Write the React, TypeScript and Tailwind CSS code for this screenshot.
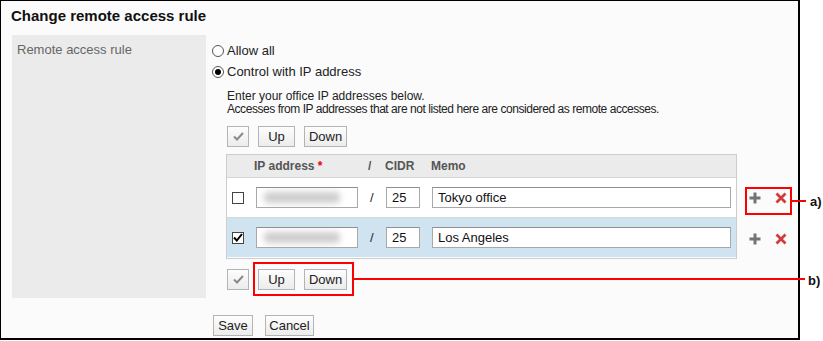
import type { ReactNode } from "react";

const font = { fontFamily: '"Liberation Sans", Arial, sans-serif' };

function Btn({ children, className = "" }: { children: ReactNode; className?: string }) {
    return (
        <button
            className={`h-[21px] border border-[#b4b4b4] bg-gradient-to-b from-[#fdfdfd] to-[#ececec] text-[13px] leading-none text-[#222] flex items-center justify-center ${className}`}
        >
            {children}
        </button>
    );
}

function CheckBtn() {
    return (
        <Btn className="w-[22px]">
            <svg width="11" height="9" viewBox="0 0 11 9">
                <path d="M1 4.5 L4 7.5 L10 1" fill="none" stroke="#8a8a8a" strokeWidth="2" />
            </svg>
        </Btn>
    );
}

function Toolbar() {
    return (
        <div className="flex gap-[9px] ml-[15px]">
            <CheckBtn />
            <Btn className="w-[37px]">Up</Btn>
            <Btn className="w-[43px]">Down</Btn>
        </div>
    );
}

function Radio({ checked, label }: { checked?: boolean; label: string }) {
    return (
        <div className="h-[21px] flex items-center gap-[3px] text-[13px] text-[#222]">
            <span className="w-[12px] h-[12px] rounded-full border border-[#555] bg-white flex items-center justify-center">
                {checked && <span className="w-[6px] h-[6px] rounded-full bg-black" />}
            </span>
            {label}
        </div>
    );
}

function Input({ className = "", children }: { className?: string; children?: ReactNode }) {
    return (
        <div
            className={`h-[21px] bg-white border border-[#a9a9a9] border-t-[#8f8f8f] flex items-center pl-[5px] text-[13px] text-[#111] overflow-hidden ${className}`}
        >
            {children}
        </div>
    );
}

function Plus() {
    return (
        <svg width="12" height="12" viewBox="0 0 12 12">
            <path d="M6 0.5 V11.5 M0.5 6 H11.5" stroke="#747474" strokeWidth="3" />
        </svg>
    );
}

function Cross() {
    return (
        <svg width="12" height="12" viewBox="0 0 12 12">
            <path d="M1.5 1.5 L10.5 10.5 M10.5 1.5 L1.5 10.5" stroke="#d23b3b" strokeWidth="2.8" />
        </svg>
    );
}

const rows = [
    { checked: false, memo: "Tokyo office", bg: "bg-white" },
    { checked: true, memo: "Los Angeles", bg: "bg-[#cfe3f1]" },
];

export default function App() {
    return (
        <div className="relative w-[823px] h-[341px] bg-white" style={font}>
            <div className="w-[800px] h-[340px] border-t border-l border-r-2 border-b-2 border-black bg-[#fbfbfb] flex flex-col">
                <div className="pt-[5px] pl-[10px] text-[15px] font-bold leading-[20px] text-[#111]">
                    Change remote access rule
                </div>

                <div className="flex mt-[9px] ml-[11px]">
                    {/* Label column */}
                    <div className="w-[194px] h-[263px] bg-[#ebebeb] pt-[7px] pl-[5px] text-[13px] leading-[16px] text-[#666]">
                        Remote access rule
                    </div>

                    {/* Field column */}
                    <div className="pl-[6px] pt-[5px] flex flex-col">
                        <Radio label="Allow all" />
                        <Radio checked label="Control with IP address" />

                        <div className="mt-[8px] ml-[15px] text-[12px] leading-[13px] text-[#222]">
                            <div>Enter your office IP addresses below.</div>
                            <div className="tracking-[-0.45px]">
                                Accesses from IP addresses that are not listed here are considered as remote accesses.
                            </div>
                        </div>

                        <div className="mt-[10px]">
                            <Toolbar />
                        </div>

                        {/* Table + row actions */}
                        <div className="flex mt-[7px] ml-[14px]">
                            <div className="w-[511px] border border-[#cdcdcd]">
                                <div className="grid grid-cols-[27px_110px_19px_45px_1fr] h-[22px] items-center bg-[#ebebeb] text-[12px] font-bold text-[#555]">
                                    <div />
                                    <div>
                                        IP address <span className="text-[#e00]">*</span>
                                    </div>
                                    <div className="pl-[4px]">/</div>
                                    <div className="pl-[2px]">CIDR</div>
                                    <div className="pl-[3px]">Memo</div>
                                </div>
                                {rows.map((row, i) => (
                                    <div
                                        key={i}
                                        className={`grid grid-cols-[27px_110px_19px_45px_1fr] h-[40px] items-center border-t border-[#d6d6d6] ${row.bg}`}
                                    >
                                        <div className="pl-[5px]">
                                            <span className="w-[12px] h-[12px] border border-[#444] bg-white flex items-center justify-center">
                                                {row.checked && (
                                                    <svg width="10" height="9" viewBox="0 0 10 9">
                                                        <path d="M1 4.5 L3.8 7.5 L9 1" fill="none" stroke="#000" strokeWidth="2" />
                                                    </svg>
                                                )}
                                            </span>
                                        </div>
                                        <div className="pl-[2px]">
                                            <Input className="w-[102px]">
                                                <div className="w-[76px] h-[11px] ml-[2px] bg-[#cdcdcd] rounded blur-[3px]" />
                                            </Input>
                                        </div>
                                        <div className="pl-[6px] text-[13px] text-[#222]">/</div>
                                        <div className="pl-[3px]">
                                            <Input className="w-[34px]">25</Input>
                                        </div>
                                        <div className="pl-[4px]">
                                            <Input className="w-[299px]">{row.memo}</Input>
                                        </div>
                                    </div>
                                ))}
                            </div>

                            <div className="pt-[23px] ml-[12px]">
                                {rows.map((_, i) => (
                                    <div key={i} className="h-[41px] flex items-center gap-[14px]">
                                        <Plus />
                                        <Cross />
                                    </div>
                                ))}
                            </div>
                        </div>

                        <div className="mt-[10px]">
                            <Toolbar />
                        </div>
                    </div>
                </div>

                <div className="flex gap-[12px] mt-[17px] ml-[212px]">
                    <Btn className="w-[40px] h-[20px]">Save</Btn>
                    <Btn className="w-[49px] h-[20px]">Cancel</Btn>
                </div>
            </div>

            {/* Annotation a) */}
            <div className="absolute left-[745px] top-[187px] w-[47px] h-[28px] border-2 border-[#f00]" />
            <div className="absolute left-[792px] top-[200px] w-[14px] h-[2px] bg-[#f00]" />
            <div className="absolute left-[810px] top-[192px] text-[13px] font-bold text-[#111]">a)</div>

            {/* Annotation b) */}
            <div className="absolute left-[253px] top-[262px] w-[101px] h-[34px] border-2 border-[#f00]" />
            <div className="absolute left-[354px] top-[278px] w-[451px] h-[2px] bg-[#f00]" />
            <div className="absolute left-[808px] top-[271px] text-[13px] font-bold text-[#111]">b)</div>
        </div>
    );
}
